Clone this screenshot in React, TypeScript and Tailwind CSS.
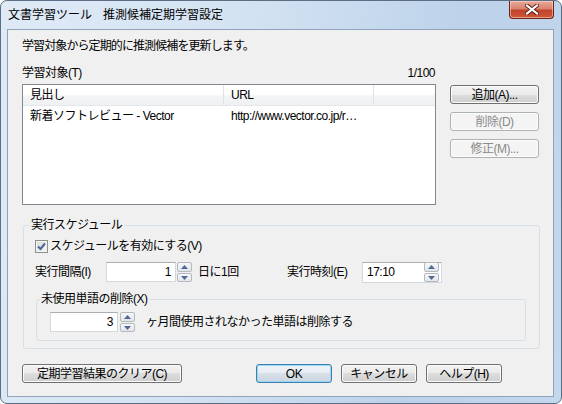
import React from "react";

const FONT = "font-['Liberation_Sans','Noto_Sans_CJK_JP',sans-serif]";

function Btn({
  children,
  className,
  disabled,
  def,
}: {
  children: React.ReactNode;
  className: string;
  disabled?: boolean;
  def?: boolean;
}) {
  let look =
    "border-[#707070] bg-[linear-gradient(#f2f2f2_0%,#ebebeb_50%,#dddddd_50%,#cfcfcf_100%)] shadow-[inset_0_0_0_1px_#fbfbfb] text-black";
  if (disabled)
    look = "border-[#adb2b5] bg-[#f4f4f4] text-[#8a8a8a] shadow-[inset_0_0_0_1px_#fcfcfc]";
  if (def)
    look =
      "border-[#3c7fb1] bg-[linear-gradient(#eef3f8_0%,#e6ecf2_50%,#d7dfe7_50%,#cdd6df_100%)] shadow-[inset_0_0_0_1px_#9bd7f4] text-black";
  return (
    <div
      className={`${className} h-[19px] rounded-[3px] border flex items-center justify-center text-[12px] leading-[14px] ${look}`}
    >
      {children}
    </div>
  );
}

function Arrow({ up }: { up?: boolean }) {
  return (
    <svg width="7" height="4" viewBox="0 0 7 4">
      {up ? (
        <polygon points="0,4 7,4 3.5,0" fill="#4e6a9a" />
      ) : (
        <polygon points="0,0 7,0 3.5,4" fill="#4e6a9a" />
      )}
    </svg>
  );
}

function Spin() {
  return (
    <div className="w-[15px] h-[20px] flex flex-col gap-[1px]">
      <div className="h-[10px] rounded-[2px] border border-[#b3b9c1] bg-[linear-gradient(#f7f7f7,#e3e5e8)] flex items-center justify-center">
        <Arrow up />
      </div>
      <div className="h-[9px] rounded-[2px] border border-[#b3b9c1] bg-[linear-gradient(#f7f7f7,#e3e5e8)] flex items-center justify-center">
        <Arrow />
      </div>
    </div>
  );
}

function CloseX() {
  return (
    <svg width="14" height="11" viewBox="0 0 14 11">
      <path d="M2 1.5 L12 9.5 M12 1.5 L2 9.5" stroke="#5b1b10" strokeWidth="4" strokeLinecap="square" />
      <path d="M2 1.5 L12 9.5 M12 1.5 L2 9.5" stroke="#ffffff" strokeWidth="2.2" strokeLinecap="square" />
    </svg>
  );
}

export default function App() {
  return (
    <div className={`${FONT} w-[562px] h-[404px] text-[12px] text-black tracking-[-0.5px]`}>
      <div className="w-[562px] h-[404px] flex flex-col rounded-[7px] border border-[#5c6e84] bg-[linear-gradient(100deg,#dfeaf6_0%,#d3e2f2_40%,#bcd2ea_75%,#c3d7ed_100%)] overflow-hidden">
        {/* title bar */}
        <div className="h-[28px] flex items-start pl-[7px] pr-[7px]">
          <div className="pt-[6px] leading-[16px] text-[12px] flex tracking-normal">
            <span>文書学習ツール</span>
            <span className="ml-[11px]">推測候補定期学習設定</span>
          </div>
          <div className="flex-1" />
          <div className="w-[45px] h-[18px] rounded-b-[4px] border border-t-0 border-[#6e2519] bg-[linear-gradient(#e9a99a_0%,#d9826d_45%,#c0432a_55%,#d0583c_100%)] shadow-[inset_0_0_0_1px_rgba(255,220,210,0.55)] flex items-center justify-center">
            <CloseX />
          </div>
        </div>
        {/* body */}
        <div className="flex-1 flex flex-col pl-[6px] pr-[7px] pb-[6px]">
          <div className="flex-1 border border-[#8fa3bb] bg-[#f0f0f0] flex flex-col pl-[14px]">
            <div className="mt-[8px] h-[16px] leading-[16px] tracking-[-0.9px]">
              学習対象から定期的に推測候補を更新します。
            </div>
            <div className="mt-[11px] h-[16px] leading-[16px] w-[413px] flex justify-between">
              <span>学習対象(T)</span>
              <span>1/100</span>
            </div>
            <div className="mt-[3px] flex">
              <div className="w-[414px] h-[121px] border border-[#828790] bg-white flex flex-col">
                <div className="h-[21px] flex bg-[linear-gradient(#ffffff_0%,#ffffff_45%,#f3f4f6_55%,#eff1f3_100%)] border-b border-[#e3e6ea]">
                  <div className="w-[201px] border-r border-[#dfe2e6] pl-[7px] leading-[21px]">見出し</div>
                  <div className="w-[150px] border-r border-[#dfe2e6] pl-[7px] leading-[21px]">URL</div>
                  <div className="flex-1" />
                </div>
                <div className="mt-[1px] h-[18px] leading-[18px] flex">
                  <div className="w-[201px] pl-[7px] whitespace-nowrap">新着ソフトレビュー - Vector</div>
                  <div className="w-[150px] pl-[7px] whitespace-nowrap">http://www.vector.co.jp/r…</div>
                </div>
              </div>
              <div className="ml-[14px] mt-[1px] flex flex-col gap-[8px]">
                <Btn className="w-[89px]">追加(A)...</Btn>
                <Btn className="w-[89px]" disabled>
                  削除(D)
                </Btn>
                <Btn className="w-[89px]" disabled>
                  修正(M)...
                </Btn>
              </div>
            </div>

            {/* schedule group */}
            <div className="mt-[20px] ml-[1px] w-[517px] h-[124px] relative border border-[#d5dfe5] rounded-[3px] flex flex-col pl-[11px] pt-[14px]">
              <span className="absolute left-[5px] -top-[8px] px-[2px] bg-[#f0f0f0] leading-[14px]">
                実行スケジュール
              </span>
              <div className="h-[13px] flex items-center">
                <div className="w-[13px] h-[13px] border border-[#8e8f8f] bg-[linear-gradient(135deg,#d8d8d8,#f6f6f6)] shadow-[inset_0_0_0_1px_#f4f4f4] flex items-center justify-center">
                  <svg width="9" height="9" viewBox="0 0 9 9">
                    <path d="M1 4.5 L3.5 7 L8 1.5" stroke="#4a6497" strokeWidth="2" fill="none" />
                  </svg>
                </div>
                <span className="ml-[2px] leading-[13px]">スケジュールを有効にする(V)</span>
              </div>
              <div className="mt-[9px] h-[20px] flex items-center">
                <div className="w-[252px] flex items-center">
                  <span className="w-[71px]">実行間隔(I)</span>
                  <div className="w-[70px] h-[20px] border border-[#d3d8de] border-t-[#abadb3] bg-white text-right pr-[4px] leading-[18px]">
                    1
                  </div>
                  <div className="ml-[1px]">
                    <Spin />
                  </div>
                  <span className="ml-[6px]">日に1回</span>
                </div>
                <span className="w-[75px]">実行時刻(E)</span>
                <div className="w-[80px] h-[21px] border border-[#d3d8de] border-t-[#abadb3] bg-white flex items-center pl-[4px] pr-[2px]">
                  <span className="flex-1 leading-[18px]">17:10</span>
                  <Spin />
                </div>
              </div>
              {/* inner group */}
              <div className="mt-[17px] ml-[1px] w-[490px] h-[42px] relative border border-[#d5dfe5] rounded-[3px] flex items-start pl-[13px] pt-[12px]">
                <span className="absolute left-[3px] -top-[8px] px-[1px] bg-[#f0f0f0] leading-[14px]">
                  未使用単語の削除(X)
                </span>
                <div className="w-[68px] h-[20px] border border-[#d3d8de] border-t-[#abadb3] bg-white text-right pr-[4px] leading-[18px]">
                  3
                </div>
                <div className="ml-[2px]">
                  <Spin />
                </div>
                <span className="ml-[11px] leading-[20px]">ヶ月間使用されなかった単語は削除する</span>
              </div>
            </div>

            {/* bottom buttons */}
            <div className="mt-[15px] flex">
              <Btn className="w-[160px]">定期学習結果のクリア(C)</Btn>
              <Btn className="w-[76px] ml-[74px]" def>
                OK
              </Btn>
              <Btn className="w-[76px] ml-[9px]">キャンセル</Btn>
              <Btn className="w-[76px] ml-[9px]">ヘルプ(H)</Btn>
            </div>
          </div>
        </div>
      </div>
    </div>
  );
}
